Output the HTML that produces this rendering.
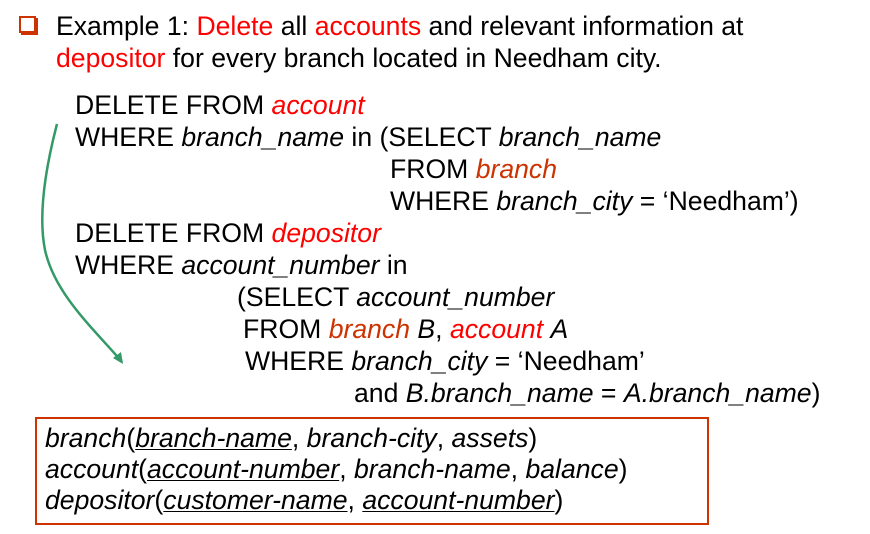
<!DOCTYPE html>
<html><head><style>
body{margin:0;width:870px;height:534px;background:#fff;position:relative;overflow:hidden;font-family:"Liberation Sans",Arial,sans-serif;font-size:26.6px;color:#000}
.l{position:absolute;line-height:32px;white-space:nowrap}
.r{color:#ff0000}
.o{color:#cc3300}
i{font-style:italic}
u{text-decoration:underline;text-decoration-thickness:1px;text-underline-offset:2px}
.box{position:absolute;left:35px;top:417px;width:670px;height:104px;border:2px solid #cc3300}
</style></head><body>
<div style="position:absolute;left:19px;top:16px;width:13px;height:13px;border:2px solid #cc3300;box-shadow:2px 2px 0 #cc3300"></div>
<div class="l" style="left:56px;top:10px">Example 1: <span class="r">Delete</span> all <span class="r">accounts</span> and relevant information at</div>
<div class="l" style="left:56px;top:42px"><span class="r">depositor</span> for every branch located in Needham city.</div>
<div class="l" style="left:75px;top:89px">DELETE FROM <i class="r">account</i></div>
<div class="l" style="left:75px;top:121px">WHERE <i>branch_name</i> in (SELECT <i>branch_name</i></div>
<div class="l" style="left:390px;top:153px">FROM <i class="o">branch</i></div>
<div class="l" style="left:390px;top:185px">WHERE <i>branch_city</i> = ‘Needham’)</div>
<div class="l" style="left:75px;top:217px">DELETE FROM <i class="r">depositor</i></div>
<div class="l" style="left:75px;top:249px">WHERE <i>account_number</i> in</div>
<div class="l" style="left:237px;top:281px">(SELECT <i>account_number</i></div>
<div class="l" style="left:243px;top:313px">FROM <i class="o">branch</i> <i>B</i>, <i class="r">account</i> <i>A</i></div>
<div class="l" style="left:245px;top:345px">WHERE <i>branch_city</i> = ‘Needham’</div>
<div class="l" style="left:354px;top:377px">and <i>B.branch_name</i> = <i>A.branch_name</i>)</div>
<div class="box"></div>
<div class="l" style="left:45px;top:422px"><i>branch</i>(<i><u>branch-name</u></i>, <i>branch-city</i>, <i>assets</i>)</div>
<div class="l" style="left:45px;top:453px"><i>account</i>(<i><u>account-number</u></i>, <i>branch-name</i>, <i>balance</i>)</div>
<div class="l" style="left:45px;top:484px"><i>depositor</i>(<i><u>customer-name</u></i>, <i><u>account-number</u></i>)</div>
<svg style="position:absolute;left:0;top:0" width="870" height="534">
<path d="M57 124 C45 170 38 215 45 250 C55 295 95 330 122 362" fill="none" stroke="#339966" stroke-width="2.5"/>
<path d="M113 358 L123 364 L121 352 Z" fill="#339966"/>
</svg>
</body></html>
